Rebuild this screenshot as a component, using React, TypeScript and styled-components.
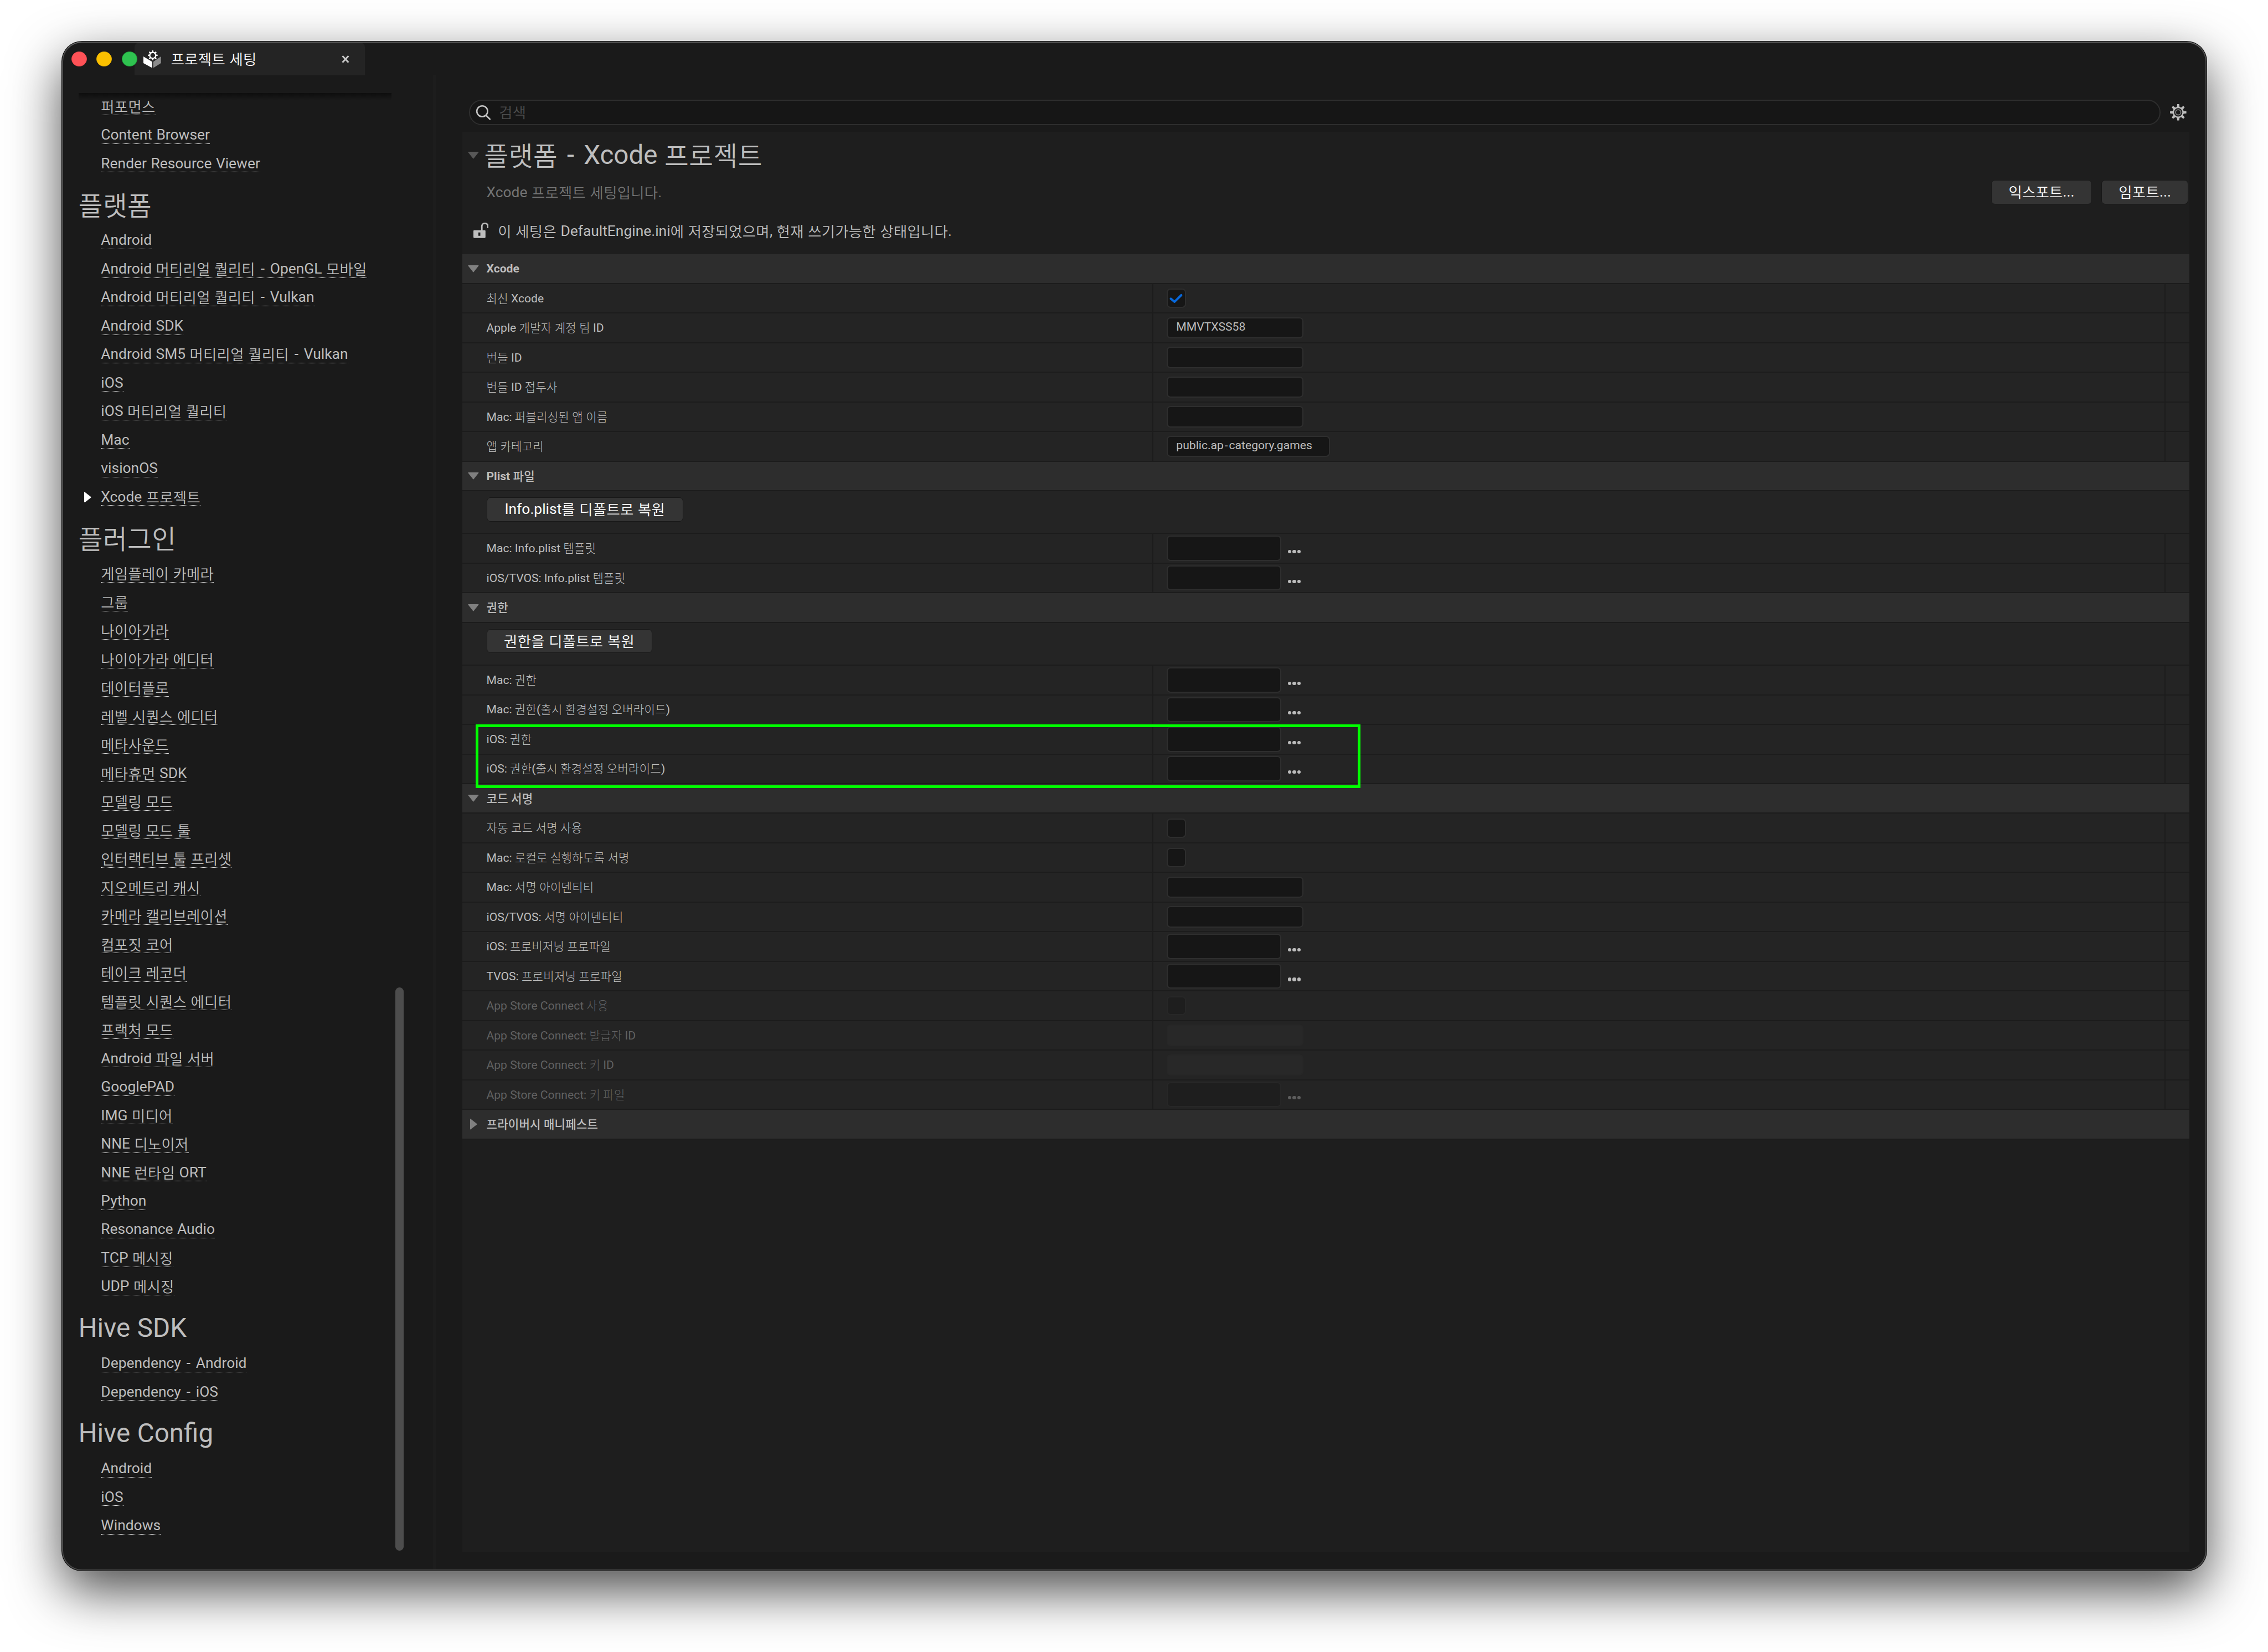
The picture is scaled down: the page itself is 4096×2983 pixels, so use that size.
import React from 'react';
import styled, { createGlobalStyle, css } from 'styled-components';

/* design units to screen pixels */
const SCALE = 4096 / 4136;
const u = (n: number) => `${+(n * SCALE).toFixed(3)}px`;

const FONT = `Roboto, 'Noto Sans CJK KR', sans-serif`;

const C = {
  window: '#1a1a1a',
  tab: '#242424',
  panel: '#1e1e1e',
  row: '#242424',
  header: '#2d2d2d',
  line: '#1c1c1c',
  text: '#bebebe',
  dim: '#616161',
  input: '#161616',
  inputBorder: '#2e2e2e',
};

const GlobalStyle = createGlobalStyle`
  * { box-sizing: border-box; }
  body { margin: 0; background: #fff; }
  #root { width: 4096px; height: 2983px; overflow: hidden; }
`;

/* ---------- text ---------- */

type Tone = 'normal' | 'small' | 'bold';
const HANGUL_WEIGHT: Record<Tone, number> = { normal: 350, small: 300, bold: 500 };

const Hangul = styled.span<{ $tone: Tone }>`
  font-weight: ${(p) => HANGUL_WEIGHT[p.$tone]};
  line-height: 0;
  letter-spacing: 0.01em;
  vertical-align: -0.065em;
`;

const Hyphen = styled.span`
  padding: 0 0.09em;
`;

function Text({ children, tone = 'normal' }: { children: string; tone?: Tone }) {
  const parts = children.split(/([\u3131-\uD7A3]+|-)/);
  return (
    <>
      {parts.map((part, i) => {
        if (i % 2 === 0) return part;
        return part === '-' ? (
          <Hyphen key={i}>-</Hyphen>
        ) : (
          <Hangul key={i} $tone={tone}>{part}</Hangul>
        );
      })}
    </>
  );
}

/* ---------- window frame ---------- */

const Desktop = styled.div`
  width: 4096px;
  height: 2983px;
  padding: 75px 0 0 112px;
  background: #fff;
  font-family: ${FONT};
  font-size: ${u(26.667)};
  word-spacing: 0.035em;
  color: ${C.text};
  white-space: nowrap;
`;

const Window = styled.div`
  width: 3873px;
  height: 2761px;
  display: flex;
  flex-direction: column;
  overflow: hidden;
  background: ${C.window};
  border: 2px solid #4a4a4a;
  border-top-color: #626262;
  border-radius: 36px;
  box-shadow: 0 0 0 1px #0a0a0a, 0 ${u(36)} ${u(95)} rgba(0, 0, 0, 0.71);
`;

const TitleBar = styled.div`
  height: ${u(59.75)};
  flex: none;
  display: flex;
`;

const Lights = styled.div`
  width: ${u(130.7)};
  flex: none;
  display: flex;
  align-items: center;
  gap: ${u(18)};
  padding-left: ${u(15)};
  position: relative;
  z-index: 1;
`;

const Light = styled.span<{ $color: string; $edge: string }>`
  width: ${u(28)};
  height: ${u(28)};
  flex: none;
  border-radius: 50%;
  background: ${(p) => p.$color};
  border: 1px solid ${(p) => p.$edge};
`;

const Tab = styled.div`
  width: ${u(420)};
  display: flex;
  align-items: center;
  padding: 0 ${u(29)} 0 ${u(16)};
  background: ${C.tab};
  border-radius: ${u(8)} ${u(8)} 0 0;
  color: #fff;
`;

const TabTitle = styled.span`
  flex: 1;
  padding-left: ${u(18)};
  line-height: ${u(40)};
`;

const Body = styled.div`
  flex: 1;
  min-height: 0;
  display: flex;
`;

/* ---------- sidebar ---------- */

const Sidebar = styled.nav`
  width: ${u(674.5)};
  flex: none;
  display: flex;
  padding: ${u(32)} 0 ${u(37)} ${u(28)};
`;

const NavScroll = styled.div`
  width: ${u(573.5)};
  position: relative;
  overflow: hidden;
`;

const TopShade = styled.div`
  position: absolute;
  inset: 0 ${u(3)} auto 0;
  height: ${u(13)};
  background: linear-gradient(#0e0e0e, #111 30%, rgba(26, 26, 26, 0));
`;

const NavHeading = styled.h2`
  margin: 0;
  height: ${u(88)};
  padding-top: ${u(9)};
  font-size: ${u(48)};
  line-height: ${u(79)};
  font-weight: 400;
`;

const NavRow = styled.div`
  height: ${u(52)};
  display: flex;
  align-items: flex-start;
`;

const NavMarker = styled.span`
  width: ${u(41)};
  height: ${u(50)};
  flex: none;
  display: flex;
  align-items: center;
  padding-left: ${u(10.5)};
`;

const NavLink = styled.a`
  margin-top: ${u(9)};
  line-height: ${u(31)};
  border-bottom: 1px dotted #e4e4e4;
`;

const ScrollTrack = styled.div`
  width: ${u(20)};
  padding: ${u(1631)} 0 0 ${u(4)};
`;

const ScrollThumb = styled.div`
  width: ${u(16)};
  height: ${u(1027)};
  border-radius: ${u(8)};
  background: #4d4d4d;
`;

const Splitter = styled.div`
  width: ${u(6)};
  flex: none;
  background: #1d1d1d;
`;

/* ---------- main ---------- */

const Main = styled.main`
  flex: 1;
  min-width: 0;
  display: flex;
  flex-direction: column;
  padding: ${u(44.5)} ${u(29.5)} ${u(31)} ${u(47.5)};
`;

const SearchRow = styled.div`
  height: ${u(46)};
  flex: none;
  display: flex;
  align-items: center;
  gap: ${u(17)};
  padding: 0 ${u(5)} 0 ${u(12)};
`;

const SearchBox = styled.div`
  flex: 1;
  height: ${u(46)};
  display: flex;
  align-items: center;
  gap: ${u(15)};
  padding-left: ${u(10)};
  border: 2px solid ${C.inputBorder};
  border-radius: ${u(23)};
  background: ${C.input};
  color: #4c4c4c;
  line-height: ${u(40)};
`;

const Panel = styled.section`
  flex: 1;
  min-height: 0;
  margin-top: ${u(12)};
  background: ${C.panel};
`;

const Intro = styled.header`
  height: ${u(224)};
`;

const TitleRow = styled.div`
  height: ${u(87.2)};
  display: flex;
  align-items: center;
`;

const ArrowSlot = styled.span<{ $inset?: number }>`
  width: ${u(44)};
  flex: none;
  display: flex;
  padding-left: ${(p) => u(p.$inset ?? 10)};
`;

const Title = styled.h1`
  margin: 0 0 0 ${u(-4)};
  font-size: ${u(48)};
  line-height: ${u(80)};
  font-weight: 400;
`;

const SubtitleRow = styled.div`
  height: ${u(46.8)};
  display: flex;
  align-items: center;
  padding: 0 ${u(2)} 0 ${u(44)};
`;

const Subtitle = styled.span`
  flex: 1;
  padding-top: ${u(2)};
  line-height: ${u(40)};
  color: #747474;
`;

const Button = styled.button<{ $width: number; $gap?: number }>`
  width: ${(p) => u(p.$width)};
  height: ${u(44)};
  margin: 0 0 0 ${(p) => u(p.$gap ?? 0)};
  padding: 0;
  border: 1px solid #181818;
  border-radius: ${u(7)};
  background: #343434;
  color: #fff;
  font: 400 ${u(26.667)} / ${u(42)} ${FONT};
  word-spacing: 0.035em;
  text-align: center;
`;

const LockRow = styled.div`
  display: flex;
  padding: ${u(28)} 0 0 ${u(20)};
  line-height: ${u(40)};
`;

const LockText = styled.span`
  padding-left: ${u(17)};
`;

/* ---------- property grid ---------- */

const band = css`
  display: flex;
  align-items: center;
  font-size: ${u(21.333)};
  line-height: ${u(30)};
  word-spacing: 0;
  border-bottom: 2px solid ${C.line};
`;

const GroupHeader = styled.div`
  ${band}
  height: ${u(54)};
  background: ${C.header};
  font-weight: 700;
`;

const ActionRow = styled.div`
  ${band}
  height: ${u(78)};
  align-items: flex-start;
  padding: ${u(11)} 0 0 ${u(44)};
  background: ${C.row};
`;

const PropertyRow = styled.div<{ $disabled?: boolean }>`
  ${band}
  height: ${u(54)};
  background: ${C.row};
  color: ${(p) => (p.$disabled ? C.dim : C.text)};
`;

const LabelCell = styled.div`
  width: ${u(1260)};
  flex: none;
  align-self: stretch;
  display: flex;
  align-items: center;
  padding-left: ${u(44)};
  border-right: 2px solid ${C.line};
`;

const ValueCell = styled.div`
  flex: 1;
  align-self: stretch;
  display: flex;
  align-items: center;
  padding-left: ${u(24)};
`;

const ResetCell = styled.div`
  width: ${u(45)};
  align-self: stretch;
  border-left: 2px solid ${C.line};
`;

const fieldSkin = css<{ $disabled?: boolean }>`
  border: 2px solid ${(p) => (p.$disabled ? '#272727' : C.inputBorder)};
  border-radius: ${u(7)};
  background: ${(p) => (p.$disabled ? '#1e1e1e' : C.input)};
`;

const CheckBox = styled.span<{ $disabled?: boolean }>`
  ${fieldSkin}
  width: ${u(35.5)};
  height: ${u(35)};
  display: flex;
  align-items: center;
  justify-content: center;
`;

const TextField = styled.span<{ $disabled?: boolean; $wide?: boolean }>`
  ${fieldSkin}
  width: ${(p) => u(p.$wide ? 298 : 250)};
  height: ${u(39)};
  padding-left: ${u(16)};
  line-height: ${u(31)};
  ${(p) => p.$disabled && `background: #282828;`}
`;

const PathField = styled.span<{ $disabled?: boolean }>`
  ${fieldSkin}
  width: ${u(210)};
  height: ${u(46)};
`;

const Browse = styled.span`
  display: flex;
  gap: ${u(2)};
  padding: ${u(12)} 0 0 ${u(12)};
`;

const Dot = styled.i<{ $disabled?: boolean }>`
  width: ${u(6.2)};
  height: ${u(6.2)};
  border-radius: 50%;
  background: ${(p) => (p.$disabled ? '#5e5e5e' : '#bcbcbc')};
`;

const Marked = styled.div`
  position: relative;
`;

const MarkFrame = styled.div`
  position: absolute;
  left: ${u(24)};
  top: ${u(-1)};
  width: ${u(1614)};
  height: ${u(116)};
  border: 5px solid #00ff00;
`;

/* ---------- icons ---------- */

const Svg = styled.svg`
  display: block;
  flex: none;
`;

const px = (n: number) => n * SCALE;

function gearPath(cx: number, cy: number, rOut: number, rIn: number, teeth: number, wOut: number, wIn: number) {
  let d = '';
  for (let i = 0; i < teeth; i++) {
    const a = (i * 2 * Math.PI) / teeth - Math.PI / 2;
    const pts: [number, number][] = [
      [rIn, a - wIn],
      [rOut, a - wOut],
      [rOut, a + wOut],
      [rIn, a + wIn],
    ];
    pts.forEach(([r, t], k) => {
      d += `${i === 0 && k === 0 ? 'M' : 'L'}${(cx + r * Math.cos(t)).toFixed(2)} ${(cy + r * Math.sin(t)).toFixed(2)}`;
    });
  }
  return d + 'Z';
}

const circlePath = (cx: number, cy: number, r: number) =>
  `M${cx - r} ${cy}a${r} ${r} 0 1 0 ${2 * r} 0a${r} ${r} 0 1 0 ${-2 * r} 0Z`;

const AppIcon = () => (
  <Svg width={px(32)} height={px(32)} viewBox="0 0 32 32">
    <path
      fill="#fff"
      fillRule="evenodd"
      d={gearPath(17, 9, 9, 6.6, 8, 0.13, 0.2) + circlePath(17, 9, 4.3)}
    />
    <path fill="#fff" d="M0 11.2 16 20.8V32L0 23.2Z" />
    <path fill="#8b8b8b" d="M32 11.2 18 20.8V32L32 23.2Z" />
  </Svg>
);

const CloseIcon = () => (
  <Svg width={px(14)} height={px(14)} viewBox="0 0 14 14">
    <path d="M1.5 1 12.5 13M12.5 1 1.5 13" stroke="#c6c6c6" strokeWidth="3" />
  </Svg>
);

const SearchIcon = () => (
  <Svg width={px(28)} height={px(28)} viewBox="0 0 28 28">
    <circle cx="12" cy="12" r="9.8" fill="none" stroke="#c4c4c4" strokeWidth="2.6" />
    <path d="M19 19.5 26 26.5" stroke="#c4c4c4" strokeWidth="2.8" strokeLinecap="round" />
  </Svg>
);

const GearIcon = () => (
  <Svg width={px(30)} height={px(30)} viewBox="0 0 30 30">
    <path
      fill="#bdbdbd"
      fillRule="evenodd"
      d={gearPath(15, 15, 15, 10.2, 8, 0.12, 0.24) + circlePath(15, 15, 7.6)}
    />
    <circle cx="15" cy="15" r="4.8" fill="none" stroke="#7e7e7e" strokeWidth="1.8" />
  </Svg>
);

const LockSvg = styled(Svg)`
  margin-top: ${u(4)};
`;

const LockIcon = () => (
  <LockSvg width={px(28)} height={px(28)} viewBox="0 0 28 28">
    <path fill="#bebebe" fillRule="evenodd" d="M1.5 14H20.5Q22 14 22 15.5V26.5Q22 28 20.5 28H1.5Q0 28 0 26.5V15.5Q0 14 1.5 14ZM9 18V24H12.6V18Z" />
    <path fill="none" stroke="#bebebe" strokeWidth="2.8" d="M15.4 15V6.5A5.6 5.3 0 0 1 26.6 6.5V10" />
  </LockSvg>
);

const DownArrow = ({ color = '#808080' }: { color?: string }) => (
  <Svg width={px(20)} height={px(13)} viewBox="0 0 20 13">
    <path d="M1 .7H19L10 12Z" fill={color} stroke={color} strokeWidth="1.4" strokeLinejoin="round" />
  </Svg>
);

const RightArrow = ({ color = '#808080' }: { color?: string }) => (
  <Svg width={px(13)} height={px(20)} viewBox="0 0 13 20">
    <path d="M.7 1V19L12 10Z" fill={color} stroke={color} strokeWidth="1.4" strokeLinejoin="round" />
  </Svg>
);

const CheckIcon = () => (
  <Svg width={px(24)} height={px(18)} viewBox="0 0 24 18">
    <path d="M2.5 9.5 9.3 15 21.5 3" fill="none" stroke="#0768dc" strokeWidth="4" strokeLinecap="round" strokeLinejoin="round" />
  </Svg>
);

/* ---------- data ---------- */

const NAV: { title?: string; items: string[] }[] = [
  { items: ['퍼포먼스', 'Content Browser', 'Render Resource Viewer'] },
  {
    title: '플랫폼',
    items: [
      'Android',
      'Android 머티리얼 퀄리티 - OpenGL 모바일',
      'Android 머티리얼 퀄리티 - Vulkan',
      'Android SDK',
      'Android SM5 머티리얼 퀄리티 - Vulkan',
      'iOS',
      'iOS 머티리얼 퀄리티',
      'Mac',
      'visionOS',
      'Xcode 프로젝트',
    ],
  },
  {
    title: '플러그인',
    items: [
      '게임플레이 카메라',
      '그룹',
      '나이아가라',
      '나이아가라 에디터',
      '데이터플로',
      '레벨 시퀀스 에디터',
      '메타사운드',
      '메타휴먼 SDK',
      '모델링 모드',
      '모델링 모드 툴',
      '인터랙티브 툴 프리셋',
      '지오메트리 캐시',
      '카메라 캘리브레이션',
      '컴포짓 코어',
      '테이크 레코더',
      '템플릿 시퀀스 에디터',
      '프랙처 모드',
      'Android 파일 서버',
      'GooglePAD',
      'IMG 미디어',
      'NNE 디노이저',
      'NNE 런타임 ORT',
      'Python',
      'Resonance Audio',
      'TCP 메시징',
      'UDP 메시징',
    ],
  },
  { title: 'Hive SDK', items: ['Dependency - Android', 'Dependency - iOS'] },
  { title: 'Hive Config', items: ['Android', 'iOS', 'Windows'] },
];

const ACTIVE = 'Xcode 프로젝트';

type Kind = 'check' | 'text' | 'path';
interface PropertyProps {
  label: string;
  kind: Kind;
  value?: string;
  checked?: boolean;
  disabled?: boolean;
  wide?: boolean;
}

function Property({ label, kind, value = '', checked, disabled, wide }: PropertyProps) {
  return (
    <PropertyRow $disabled={disabled}>
      <LabelCell>
        <span><Text tone="small">{label}</Text></span>
      </LabelCell>
      <ValueCell>
        {kind === 'check' && <CheckBox $disabled={disabled}>{checked && <CheckIcon />}</CheckBox>}
        {kind === 'text' && <TextField $disabled={disabled} $wide={wide}><Text>{value}</Text></TextField>}
        {kind === 'path' && (
          <>
            <PathField $disabled={disabled} />
            <Browse>
              <Dot $disabled={disabled} />
              <Dot $disabled={disabled} />
              <Dot $disabled={disabled} />
            </Browse>
          </>
        )}
      </ValueCell>
      <ResetCell />
    </PropertyRow>
  );
}

function Group({ title, open = true }: { title: string; open?: boolean }) {
  return (
    <GroupHeader>
      <ArrowSlot $inset={open ? 10 : 14}>{open ? <DownArrow /> : <RightArrow />}</ArrowSlot>
      <span><Text tone="bold">{title}</Text></span>
    </GroupHeader>
  );
}

export default function App() {
  return (
    <>
      <GlobalStyle />
      <Desktop>
        <Window>
          <TitleBar>
            <Lights>
              <Light $color="#ff5257" $edge="#e8474c" />
              <Light $color="#fbc000" $edge="#e3ad00" />
              <Light $color="#2fc250" $edge="#1fa83c" />
            </Lights>
            <Tab>
              <AppIcon />
              <TabTitle><Text>프로젝트 세팅</Text></TabTitle>
              <CloseIcon />
            </Tab>
          </TitleBar>
          <Body>
            <Sidebar>
              <NavScroll>
                {NAV.map((group, g) => (
                  <React.Fragment key={g}>
                    {group.title && <NavHeading><Text>{group.title}</Text></NavHeading>}
                    {group.items.map((item) => (
                      <NavRow key={item}>
                        <NavMarker>{item === ACTIVE && <RightArrow color="#fff" />}</NavMarker>
                        <NavLink><Text>{item}</Text></NavLink>
                      </NavRow>
                    ))}
                  </React.Fragment>
                ))}
                <TopShade />
              </NavScroll>
              <ScrollTrack>
                <ScrollThumb />
              </ScrollTrack>
            </Sidebar>
            <Splitter />
            <Main>
              <SearchRow>
                <SearchBox>
                  <SearchIcon />
                  <span><Text>검색</Text></span>
                </SearchBox>
                <GearIcon />
              </SearchRow>
              <Panel>
                <Intro>
                  <TitleRow>
                    <ArrowSlot><DownArrow color="#585858" /></ArrowSlot>
                    <Title><Text>플랫폼 - Xcode 프로젝트</Text></Title>
                  </TitleRow>
                  <SubtitleRow>
                    <Subtitle><Text>Xcode 프로젝트 세팅입니다.</Text></Subtitle>
                    <Button $width={183}><Text>익스포트...</Text></Button>
                    <Button $width={158} $gap={18}><Text>임포트...</Text></Button>
                  </SubtitleRow>
                  <LockRow>
                    <LockIcon />
                    <LockText><Text>이 세팅은 DefaultEngine.ini에 저장되었으며, 현재 쓰기가능한 상태입니다.</Text></LockText>
                  </LockRow>
                </Intro>

                <Group title="Xcode" />
                <Property label="최신 Xcode" kind="check" checked />
                <Property label="Apple 개발자 계정 팀 ID" kind="text" value="MMVTXSS58" />
                <Property label="번들 ID" kind="text" />
                <Property label="번들 ID 접두사" kind="text" />
                <Property label="Mac: 퍼블리싱된 앱 이름" kind="text" />
                <Property label="앱 카테고리" kind="text" value="public.ap-category.games" wide />

                <Group title="Plist 파일" />
                <ActionRow>
                  <Button $width={359}><Text>Info.plist를 디폴트로 복원</Text></Button>
                </ActionRow>
                <Property label="Mac: Info.plist 템플릿" kind="path" />
                <Property label="iOS/TVOS: Info.plist 템플릿" kind="path" />

                <Group title="권한" />
                <ActionRow>
                  <Button $width={302}><Text>권한을 디폴트로 복원</Text></Button>
                </ActionRow>
                <Property label="Mac: 권한" kind="path" />
                <Property label="Mac: 권한(출시 환경설정 오버라이드)" kind="path" />
                <Marked>
                  <Property label="iOS: 권한" kind="path" />
                  <Property label="iOS: 권한(출시 환경설정 오버라이드)" kind="path" />
                  <MarkFrame />
                </Marked>

                <Group title="코드 서명" />
                <Property label="자동 코드 서명 사용" kind="check" />
                <Property label="Mac: 로컬로 실행하도록 서명" kind="check" />
                <Property label="Mac: 서명 아이덴티티" kind="text" />
                <Property label="iOS/TVOS: 서명 아이덴티티" kind="text" />
                <Property label="iOS: 프로비저닝 프로파일" kind="path" />
                <Property label="TVOS: 프로비저닝 프로파일" kind="path" />
                <Property label="App Store Connect 사용" kind="check" disabled />
                <Property label="App Store Connect: 발급자 ID" kind="text" disabled />
                <Property label="App Store Connect: 키 ID" kind="text" disabled />
                <Property label="App Store Connect: 키 파일" kind="path" disabled />

                <Group title="프라이버시 매니페스트" open={false} />
              </Panel>
            </Main>
          </Body>
        </Window>
      </Desktop>
    </>
  );
}
